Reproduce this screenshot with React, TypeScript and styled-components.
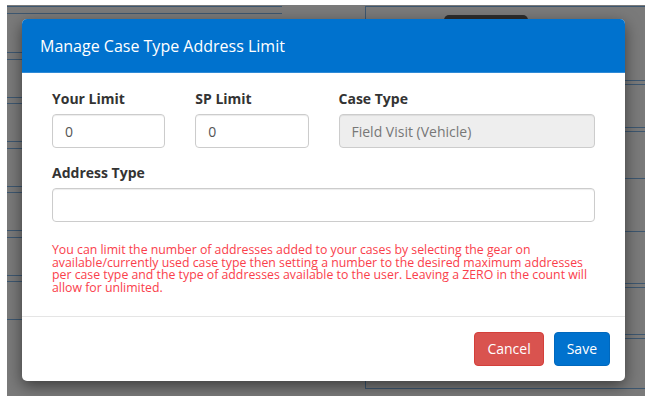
import styled, { createGlobalStyle } from "styled-components";

const GlobalStyle = createGlobalStyle`
  * {
    box-sizing: border-box;
  }
  body {
    margin: 0;
    background: #ffffff;
    font-family: "Open Sans", "Liberation Sans", sans-serif;
  }
`;

const Screen = styled.div`
  position: relative;
  width: 638px;
  height: 391px;
  margin: 5px 0 0 7px;
  overflow: hidden;
  background: #ffffff;
`;

/* page under the backdrop */
const Page = styled.div`
  display: flex;
  height: 100%;
`;

const LeftPane = styled.div`
  width: 358px;
  padding-top: 1px;
`;

const TopBar = styled.div`
  width: 275px;
  height: 8px;
  border-top: 1px solid #7fb6ea;
  border-bottom: 1px solid #7fb6ea;
`;

const List = styled.div`
  display: flex;
  flex-direction: column;
  gap: 5.5px;
`;

const ListRow = styled.div<{ $first?: boolean }>`
  height: 39px;
  border-top: ${({ $first }) => ($first ? "none" : "1px solid #7fb6ea")};
  border-bottom: 1px solid #7fb6ea;
`;

const RightPane = styled.div`
  flex: 1;
  height: 383px;
  margin-top: 1px;
  border-top: 1px solid #7fb6ea;
  border-left: 1px solid #7fb6ea;
  border-bottom: 1px solid #7fb6ea;
  display: flex;
  flex-direction: column;
  gap: 3px;
`;

const PaneHead = styled.div`
  height: 74px;
  padding: 8px 0 0 78px;
  border-bottom: 1px solid #7fb6ea;
`;

const DarkPill = styled.div`
  width: 84px;
  height: 30px;
  border-radius: 5px;
  background: #5e5e5e;
`;

const Block = styled.div<{ $h: number; $open?: boolean }>`
  height: ${({ $h }) => $h}px;
  border-top: 1px solid #7fb6ea;
  border-bottom: ${({ $open }) => ($open ? "none" : "1px solid #7fb6ea")};
  display: flex;
  flex-direction: column;
`;

const BlockItem = styled.div<{ $h: number }>`
  height: ${({ $h }) => $h}px;
  border-bottom: 1px solid #7fb6ea;
`;

const Backdrop = styled.div`
  position: absolute;
  inset: 0;
  background: rgba(0, 0, 0, 0.52);
`;

/* modal */
const Modal = styled.div`
  position: absolute;
  top: 14px;
  left: 15px;
  width: 603px;
  background: #ffffff;
  border-radius: 5px;
  box-shadow: 0 5px 15px rgba(0, 0, 0, 0.5);
  overflow: hidden;
`;

const Header = styled.div`
  height: 54px;
  display: flex;
  align-items: center;
  padding: 0 18px;
  background: #0072ce;
  border-bottom: 1px solid #2f8ad6;
`;

const Title = styled.h4`
  margin: 0;
  color: #ffffff;
  font-size: 16px;
  font-weight: 400;
`;

const Body = styled.div`
  padding: 16px 15px 22px;
`;

const Row = styled.div`
  display: grid;
  grid-template-columns: 3fr 3fr 6fr;
`;

const Group = styled.div<{ $gap?: number }>`
  padding: 0 15px;
  margin-bottom: ${({ $gap }) => $gap ?? 15}px;
`;

const Label = styled.label`
  display: block;
  margin-bottom: 5px;
  font-size: 14px;
  font-weight: 700;
  line-height: 20px;
  color: #333333;
`;

const Input = styled.input`
  display: block;
  width: 100%;
  height: 34px;
  padding: 6px 12px;
  border: 1px solid #cccccc;
  border-radius: 4px;
  background: #ffffff;
  font-family: inherit;
  font-size: 14px;
  color: #555555;
  box-shadow: inset 0 1px 1px rgba(0, 0, 0, 0.075);

  &:disabled {
    background: #eeeeee;
    color: #777777;
  }
`;

const Note = styled.p`
  margin: 0 15px;
  font-size: 12.3px;
  line-height: 12.5px;
  color: #fa3e4b;
`;

const Footer = styled.div`
  display: flex;
  justify-content: flex-end;
  gap: 10px;
  padding: 15px;
  border-top: 1px solid #e5e5e5;
`;

const Button = styled.button<{ $variant: "danger" | "primary" }>`
  height: 34px;
  padding: 6px 12px;
  border: 1px solid
    ${({ $variant }) => ($variant === "danger" ? "#d43f3a" : "#0068bd")};
  border-radius: 4px;
  background: ${({ $variant }) =>
    $variant === "danger" ? "#d9534f" : "#0072ce"};
  color: #ffffff;
  font-family: inherit;
  font-size: 14px;
  line-height: 20px;
  cursor: pointer;
`;

const App = () => {
  return (
    <>
      <GlobalStyle />
      <Screen>
        <Page>
          <LeftPane>
            <TopBar />
            <List>
              <ListRow $first />
              {Array.from({ length: 6 }).map((_, i) => (
                <ListRow key={i} />
              ))}
            </List>
          </LeftPane>
          <RightPane>
            <PaneHead>
              <DarkPill />
            </PaneHead>
            <Block $h={45} />
            <Block $h={153}>
              <BlockItem $h={47} />
              <BlockItem $h={53} />
            </Block>
            <Block $h={49} />
            <Block $h={50} $open />
          </RightPane>
        </Page>
        <Backdrop />
        <Modal>
          <Header>
            <Title>Manage Case Type Address Limit</Title>
          </Header>
          <Body>
            <Row>
              <Group>
                <Label>Your Limit</Label>
                <Input defaultValue="0" />
              </Group>
              <Group>
                <Label>SP Limit</Label>
                <Input defaultValue="0" />
              </Group>
              <Group>
                <Label>Case Type</Label>
                <Input defaultValue="Field Visit (Vehicle)" disabled />
              </Group>
            </Row>
            <Group $gap={22}>
              <Label>Address Type</Label>
              <Input />
            </Group>
            <Note>
              You can limit the number of addresses added to your cases by
              selecting the gear on available/currently used case type then
              setting a number to the desired maximum addresses per case type
              and the type of addresses available to the user. Leaving a ZERO in
              the count will allow for unlimited.
            </Note>
          </Body>
          <Footer>
            <Button $variant="danger">Cancel</Button>
            <Button $variant="primary">Save</Button>
          </Footer>
        </Modal>
      </Screen>
    </>
  );
};

export default App;
